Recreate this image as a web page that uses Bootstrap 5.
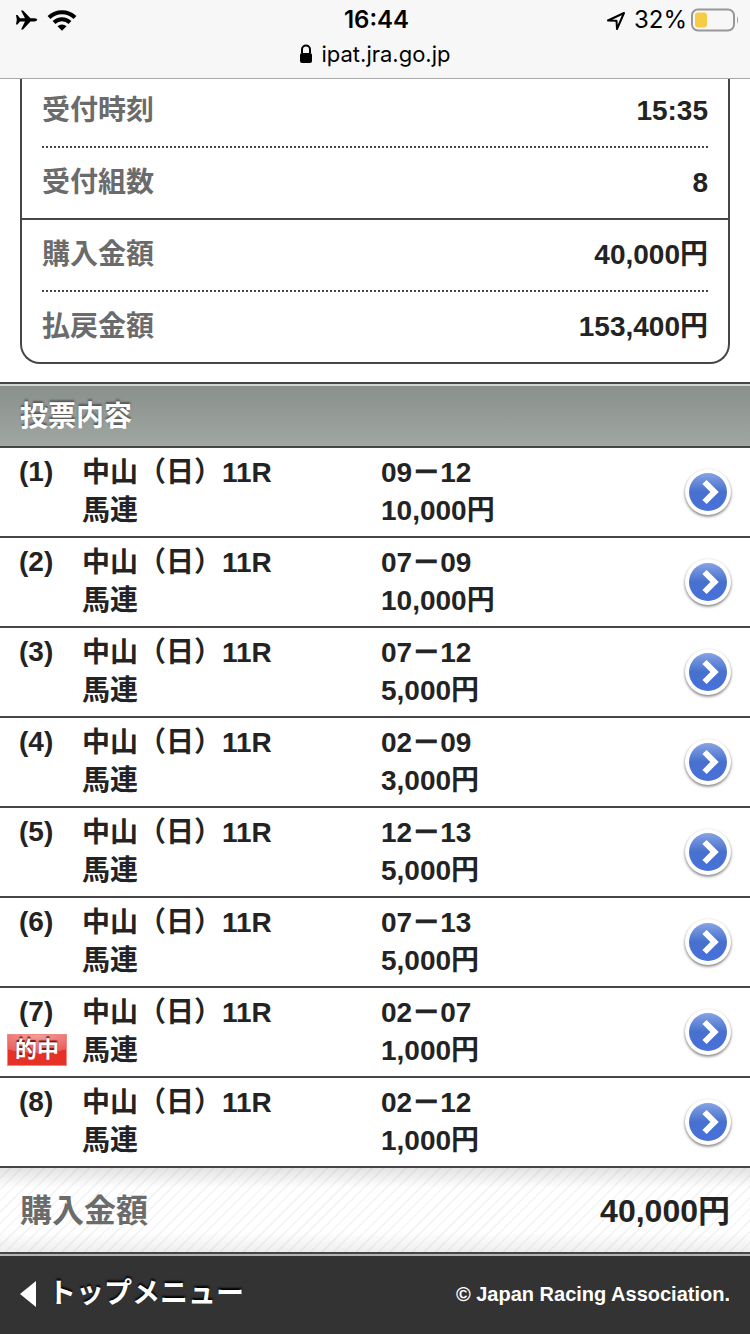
<!DOCTYPE html>
<html lang="ja">
<head>
<meta charset="utf-8">
<meta name="viewport" content="width=device-width, initial-scale=1">
<title>投票内容</title>
<link href="https://cdn.jsdelivr.net/npm/bootstrap@5.3.0/dist/css/bootstrap.min.css" rel="stylesheet">
<script src="https://cdn.jsdelivr.net/npm/bootstrap@5.3.0/dist/js/bootstrap.bundle.min.js" defer></script>
<style>
:root { --line: #464648; --ink: #232323; --label: #6b6b6b; }
body { font-family: "Liberation Sans", "Noto Sans CJK JP", sans-serif; font-size: 28px; line-height: 38px; font-weight: 700; color: var(--ink); background: #fff; }
.browser-bar { background: #f7f7f7; border-bottom: 1px solid #a9a9ab; font-family: Inter, "Noto Sans CJK JP", sans-serif; color: #000; font-size: 24px; font-weight: 400; }
.status-row { display: grid; grid-template-columns: 1fr auto 1fr; height: 40px; padding: 0 11px 0 14px; }
.clock { font-size: 24px; font-weight: 600; }
.url-row { line-height: 28px; padding-bottom: 10px; font-size: 22px; }
.summary { margin: -3px 20px 18px; border: 2px solid var(--line); border-top: 0; border-radius: 0 0 20px 20px; }
.summary-group + .summary-group { border-top: 2px solid var(--line); }
.summary-group { padding: 0 20px; }
.summary-item { height: 70px; }
.summary-item + .summary-item { border-top: 2px dotted var(--line); height: 72px; }
.summary dt, .total dt { color: var(--label); }
.section-title { font-size: 28px; line-height: 58px; font-weight: 700; color: #fff; text-shadow: 0 -2px 2px #555; padding: 4px 20px 0; border-top: 2px solid var(--line); border-bottom: 2px solid var(--line); box-shadow: inset 0 2px #d3d4cf; background: linear-gradient(#898f8b, #a0a6a2); }
.bet { display: grid; grid-template-columns: 82px 1fr 1fr 56px; padding: 6px 14px 6px 0; border-bottom: 2px solid var(--line); color: inherit; text-decoration: none; }
.bet:hover { color: inherit; }
.bet-no { padding-left: 19px; line-height: 36px; }
.bet i { font-style: normal; -webkit-text-stroke: 1px currentColor; }
.hit { display: block; width: 60px; height: 32px; margin: 4px 0 0 7px; border: 1px solid #f08a85; font-size: 22px; line-height: 30px; color: #fff; text-align: center; text-shadow: 0 -2px 1px #7a1713; background: radial-gradient(ellipse 50px 18px at 50% 0, #f2a09c, #ea5c58 98%, #e63226 100%); }
.arrow { width: 56px; height: 56px; }
.total { height: 84px; padding: 2px 20px 0; font-size: 32px; background: linear-gradient(#0000001c, #0000 24%, #0000 76%, #0001), repeating-linear-gradient(135deg, #fff 0 6px, #f3f3f3 7px 8px); }
.page-foot { background: #333; border-top: 2px solid var(--line); box-shadow: inset 0 2px #b5b5b5; height: 82px; padding: 0 20px; color: #fff; }
.page-foot a { color: #fff; text-shadow: 0 -2px 2px #000; }
.page-foot small { font-size: 20px; }
</style>
</head>
<body>
<header class="browser-bar sticky-top">
  <div class="status-row align-items-center">
    <div class="d-flex align-items-center gap-2">
      <svg width="25" height="22" viewBox="0 0 25 22" aria-label="機内モード"><path d="M2 6h1.500l2.500 3.200h5L7 1.500h2l7.500 7.700h4q2.800.3 2.800 1.600t-2.800 1.600h-4L9 20.500H7l4-8.100H6l-2.500 3.100H2l.8-4.700z"/></svg>
      <svg width="30" height="22" viewBox="0 0 30 22" aria-label="Wi-Fi"><g fill="none" stroke="#000" stroke-width="4"><path d="M2 8.500a18.500 18.500 0 0 1 26 0M7 13.500a11.500 11.500 0 0 1 16 0"/></g><path d="M10.500 17.200a6.500 6.500 0 0 1 9 0L15 21.800z"/></svg>
    </div>
    <span class="clock">16:44</span>
    <div class="d-flex align-items-center justify-content-end">
      <svg class="me-2" width="20" height="20" viewBox="0 0 20 20" aria-label="位置情報"><path d="M2 10.500 18 3 11 19l-.5-8.300z" fill="none" stroke="#000" stroke-width="2" stroke-linejoin="round"/></svg>
      <span class="me-1">32%</span>
      <svg width="48" height="24" viewBox="0 0 48 24" aria-label="バッテリー"><rect x="1" y="1.500" width="42" height="21" rx="6" fill="none" stroke="#98989a" stroke-width="2"/><rect x="4" y="4.500" width="12" height="15" rx="3" fill="#f6cb46"/><path d="M46 8q2 4 0 8z" fill="#98989a"/></svg>
    </div>
  </div>
  <div class="url-row d-flex justify-content-center align-items-center">
    <svg class="me-2" width="14" height="20" viewBox="0 0 14 20" aria-label="保護"><path d="M3 9V5.500a4 4 0 0 1 8 0V9" fill="none" stroke="#000" stroke-width="2"/><rect x="1" y="9" width="12" height="10" rx="2"/></svg>
    <span>ipat.jra.go.jp</span>
  </div>
</header>
<main>
  <dl class="summary">
    <div class="summary-group">
      <div class="summary-item d-flex justify-content-between align-items-center"><dt>受付時刻</dt><dd class="m-0">15:35</dd></div>
      <div class="summary-item d-flex justify-content-between align-items-center"><dt>受付組数</dt><dd class="m-0">8</dd></div>
    </div>
    <div class="summary-group">
      <div class="summary-item d-flex justify-content-between align-items-center"><dt>購入金額</dt><dd class="m-0">40,000円</dd></div>
      <div class="summary-item d-flex justify-content-between align-items-center"><dt>払戻金額</dt><dd class="m-0">153,400円</dd></div>
    </div>
  </dl>
  <h2 class="section-title m-0">投票内容</h2>
  <svg width="0" height="0" class="position-absolute" aria-hidden="true">
    <linearGradient id="disc" x2="0" y2="1"><stop stop-color="#86a4e4"/><stop offset=".5" stop-color="#4770ce"/><stop offset="1" stop-color="#4871dc"/></linearGradient>
    <filter id="soft" x="-20%" y="-20%" width="140%" height="140%"><feGaussianBlur stdDeviation="1.500"/></filter>
    <symbol id="go" viewBox="0 0 56 56"><circle cx="28" cy="29.500" r="23" fill="#777" filter="url(#soft)"/><circle cx="28" cy="28" r="23" fill="#fff"/><circle cx="28" cy="28" r="19" fill="url(#disc)"/><path d="M24.500 18 34.500 28 24.500 38" fill="none" stroke="#fff" stroke-width="6"/></symbol>
  </svg>
  <nav aria-label="投票内容">
    <a href="#" class="bet"><span class="bet-no">(1)</span><span>中山（日）11R<br>馬連</span><span>09<i>－</i>12<br>10,000円</span><svg class="arrow align-self-center"><use href="#go"/></svg></a>
    <a href="#" class="bet"><span class="bet-no">(2)</span><span>中山（日）11R<br>馬連</span><span>07<i>－</i>09<br>10,000円</span><svg class="arrow align-self-center"><use href="#go"/></svg></a>
    <a href="#" class="bet"><span class="bet-no">(3)</span><span>中山（日）11R<br>馬連</span><span>07<i>－</i>12<br>5,000円</span><svg class="arrow align-self-center"><use href="#go"/></svg></a>
    <a href="#" class="bet"><span class="bet-no">(4)</span><span>中山（日）11R<br>馬連</span><span>02<i>－</i>09<br>3,000円</span><svg class="arrow align-self-center"><use href="#go"/></svg></a>
    <a href="#" class="bet"><span class="bet-no">(5)</span><span>中山（日）11R<br>馬連</span><span>12<i>－</i>13<br>5,000円</span><svg class="arrow align-self-center"><use href="#go"/></svg></a>
    <a href="#" class="bet"><span class="bet-no">(6)</span><span>中山（日）11R<br>馬連</span><span>07<i>－</i>13<br>5,000円</span><svg class="arrow align-self-center"><use href="#go"/></svg></a>
    <a href="#" class="bet"><span><span class="bet-no d-block">(7)</span><span class="hit">的中</span></span><span>中山（日）11R<br>馬連</span><span>02<i>－</i>07<br>1,000円</span><svg class="arrow align-self-center"><use href="#go"/></svg></a>
    <a href="#" class="bet"><span class="bet-no">(8)</span><span>中山（日）11R<br>馬連</span><span>02<i>－</i>12<br>1,000円</span><svg class="arrow align-self-center"><use href="#go"/></svg></a>
  </nav>
  <dl class="total m-0 d-flex justify-content-between align-items-center"><dt>購入金額</dt><dd class="m-0">40,000円</dd></dl>
</main>
<footer class="page-foot d-flex justify-content-between align-items-center">
  <a href="#" class="text-decoration-none d-flex align-items-center gap-2"><svg class="me-1" width="16" height="26" viewBox="0 0 16 26" aria-hidden="true"><path d="M0 13 16 0v26z" fill="#fff"/></svg>トップメニュー</a>
  <small>© Japan Racing Association.</small>
</footer>
</body>
</html>
